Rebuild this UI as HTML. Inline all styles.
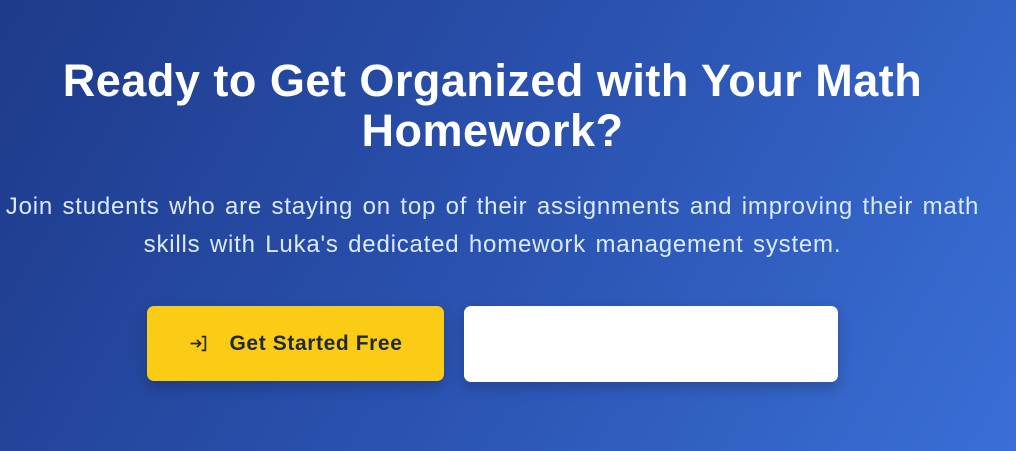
<!DOCTYPE html>
<html><head><meta charset="utf-8"><style>
html,body{margin:0;padding:0}
body{width:1016px;height:451px;overflow:hidden;background:linear-gradient(120deg,#1e3a8a 0%,#2a52b0 50%,#3a6fd6 100%);font-family:"Liberation Sans",sans-serif;position:relative}
.wrap{position:absolute;left:0;top:0;width:985px;text-align:center}
h1{margin:0;position:absolute;top:56px;left:0;width:985px;font-size:45px;line-height:50px;font-weight:bold;color:#fff;letter-spacing:0.5px}
p{margin:0;position:absolute;top:188px;left:-5px;width:995px;font-size:24px;line-height:38px;color:#dbeafe;letter-spacing:0.8px;word-spacing:2px}
.b1{position:absolute;left:147px;top:306px;width:297px;height:75px;background:#facc15;border-radius:7px;box-shadow:0 6px 14px rgba(0,0,0,.2);color:#1f2937;font-size:21px;font-weight:bold;display:flex;align-items:center;justify-content:center;letter-spacing:0.6px}
.b1 svg{margin-right:22px}
.b2{position:absolute;left:464px;top:306px;width:374px;height:76px;background:#fff;border-radius:7px;box-shadow:0 6px 14px rgba(0,0,0,.2)}
</style></head><body>
<div class="wrap">
<h1>Ready to Get Organized with Your Math<br>Homework?</h1>
<p>Join students who are staying on top of their assignments and improving their math<br>skills with Luka's dedicated homework management system.</p>
<div class="b1"><svg width="19" height="19" viewBox="0 0 18 18" fill="none" stroke="#1f2937" stroke-width="1.6"><path d="M1.5 9h9M7.5 5.5L11 9 7.5 12.5M12 2.5h3.5v13H12"/></svg>Get Started Free</div>
<div class="b2"></div>
</div>
</body></html>
